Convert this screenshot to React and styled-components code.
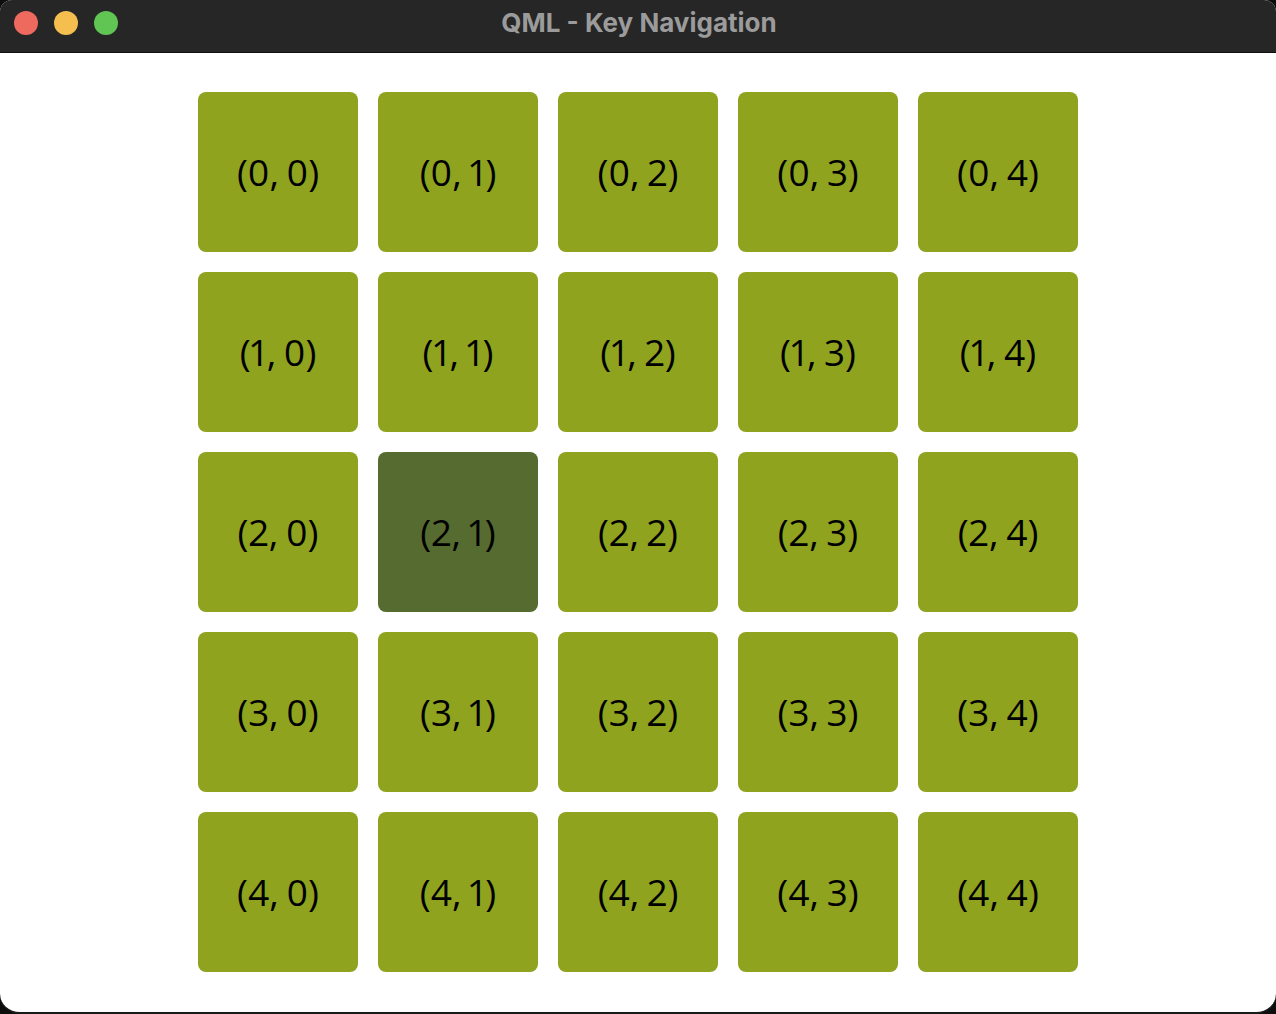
import React from 'react';
import styled, { createGlobalStyle } from 'styled-components';

const GlobalStyle = createGlobalStyle`
  html, body {
    margin: 0;
    padding: 0;
    background: #0d0d0d;
  }
  #root {
    width: 1276px;
    height: 1014px;
  }
`;

const Window = styled.div`
  width: 1276px;
  height: 1014px;
  display: flex;
  flex-direction: column;
  border-radius: 12px 12px 20px 20px;
  overflow: hidden;
  background: #ffffff;
  box-sizing: border-box;
  border-bottom: 2px solid #1a1a1a;
`;

const TitleBar = styled.div`
  position: relative;
  height: 52px;
  flex: none;
  background: #262626;
  border-bottom: 1px solid #0f0f0f;
  display: flex;
  align-items: center;
  justify-content: center;
`;

const Lights = styled.div`
  position: absolute;
  left: 14px;
  top: 11px;
  display: flex;
  gap: 16px;
`;

const Light = styled.span`
  width: 24px;
  height: 24px;
  border-radius: 50%;
  background: ${(p) => p.color};
`;

const Title = styled.div`
  font-family: Inter, "Open Sans", sans-serif;
  font-weight: 700;
  font-size: 26px;
  color: #9b9b9b;
  margin-top: -7px;
  margin-left: 2px;
`;

const Content = styled.div`
  flex: 1;
  display: flex;
  justify-content: center;
  padding-top: 39px;
`;

const Grid = styled.div`
  display: grid;
  grid-template-columns: repeat(5, 160px);
  grid-auto-rows: 160px;
  gap: 20px;
  align-content: start;
`;

const Tile = styled.div`
  border-radius: 8px;
  background: ${(p) => (p.$active ? '#556b2f' : '#8fa31f')};
  display: flex;
  align-items: center;
  justify-content: center;
  padding-bottom: 2px;
  box-sizing: border-box;
  font-family: "Open Sans", "Noto Sans", sans-serif;
  font-size: 37px;
  font-feature-settings: "pnum" 1;
  word-spacing: -2px;
  color: #000;
`;

export default function App() {
  const cells = [];
  for (let r = 0; r < 5; r++) {
    for (let c = 0; c < 5; c++) {
      cells.push(
        <Tile key={`${r}-${c}`} $active={r === 2 && c === 1}>
          ({r}, {c})
        </Tile>
      );
    }
  }
  return (
    <>
      <GlobalStyle />
      <Window>
        <TitleBar>
          <Lights>
            <Light color="#ee6a5f" />
            <Light color="#f5bf4f" />
            <Light color="#61c554" />
          </Lights>
          <Title>QML - Key Navigation</Title>
        </TitleBar>
        <Content>
          <Grid>{cells}</Grid>
        </Content>
      </Window>
    </>
  );
}
